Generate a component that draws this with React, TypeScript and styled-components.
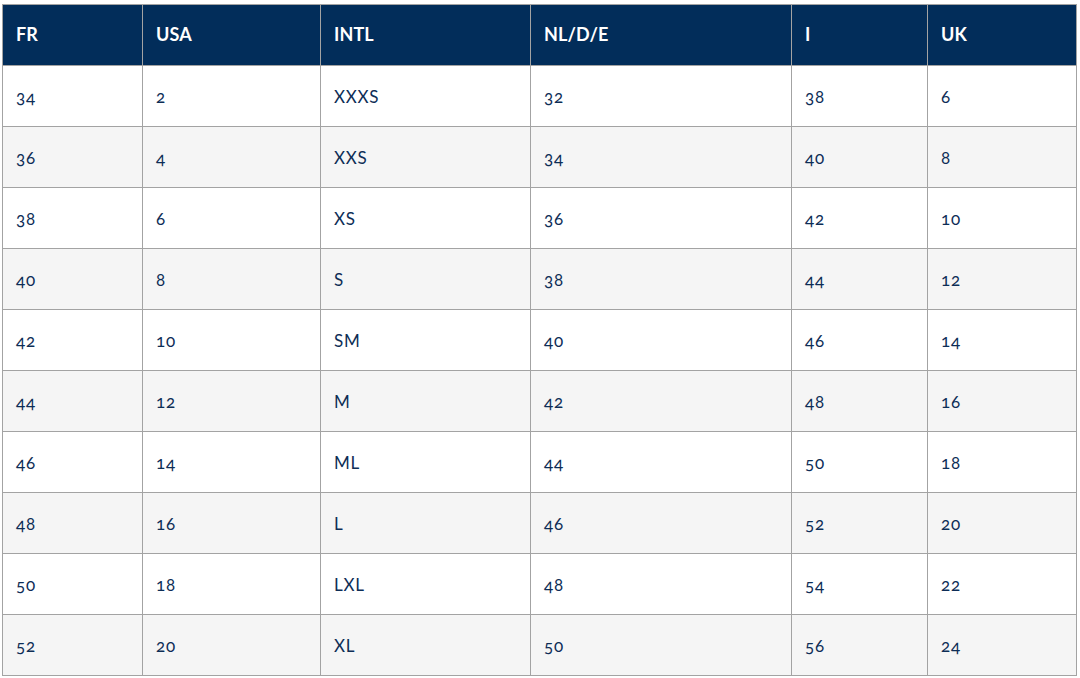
import React from "react";
import styled, { createGlobalStyle } from "styled-components";

const Global = createGlobalStyle`
  html, body { margin: 0; padding: 0; background: #ffffff; }
  body { font-family: Lato, "Open Sans", sans-serif; }
`;

const Wrap = styled.div`
  padding: 4px 0 0 2px;
`;

const Table = styled.table`
  border-collapse: collapse;
  table-layout: fixed;
  width: 1075px;
  font-family: Lato, "Open Sans", sans-serif;
  font-variant-numeric: oldstyle-nums;
  color: #0d2d56;
`;

const HeadCell = styled.th<{ $w: number }>`
  width: ${(p) => p.$w}px;
  height: 61px;
  box-sizing: border-box;
  background: #022d5a;
  color: #ffffff;
  font-weight: 700;
  font-size: 18px;
  text-align: left;
  padding: 0 0 2px 13px;
  border: 1px solid #a3a3a3;
  letter-spacing: 0.1px;
`;

const Row = styled.tr<{ $alt: boolean }>`
  background: ${(p) => (p.$alt ? "#f5f5f5" : "#ffffff")};
`;

const Cell = styled.td`
  height: 61px;
  box-sizing: border-box;
  font-size: 17px;
  font-weight: 400;
  padding: 1px 0 0 13px;
  border: 1px solid #a3a3a3;
  letter-spacing: 0.7px;
`;

const widths = [140, 178, 210, 261, 136, 149];
const headers = ["FR", "USA", "INTL", "NL/D/E", "I", "UK"];
const rows = [
  ["34", "2", "XXXS", "32", "38", "6"],
  ["36", "4", "XXS", "34", "40", "8"],
  ["38", "6", "XS", "36", "42", "10"],
  ["40", "8", "S", "38", "44", "12"],
  ["42", "10", "SM", "40", "46", "14"],
  ["44", "12", "M", "42", "48", "16"],
  ["46", "14", "ML", "44", "50", "18"],
  ["48", "16", "L", "46", "52", "20"],
  ["50", "18", "LXL", "48", "54", "22"],
  ["52", "20", "XL", "50", "56", "24"],
];

export default function App() {
  return (
    <>
      <Global />
      <Wrap>
        <Table>
          <thead>
            <tr>
              {headers.map((h, i) => (
                <HeadCell key={h} $w={widths[i]}>
                  {h}
                </HeadCell>
              ))}
            </tr>
          </thead>
          <tbody>
            {rows.map((r, i) => (
              <Row key={i} $alt={i % 2 === 1}>
                {r.map((c, j) => (
                  <Cell key={j}>{c}</Cell>
                ))}
              </Row>
            ))}
          </tbody>
        </Table>
      </Wrap>
    </>
  );
}
